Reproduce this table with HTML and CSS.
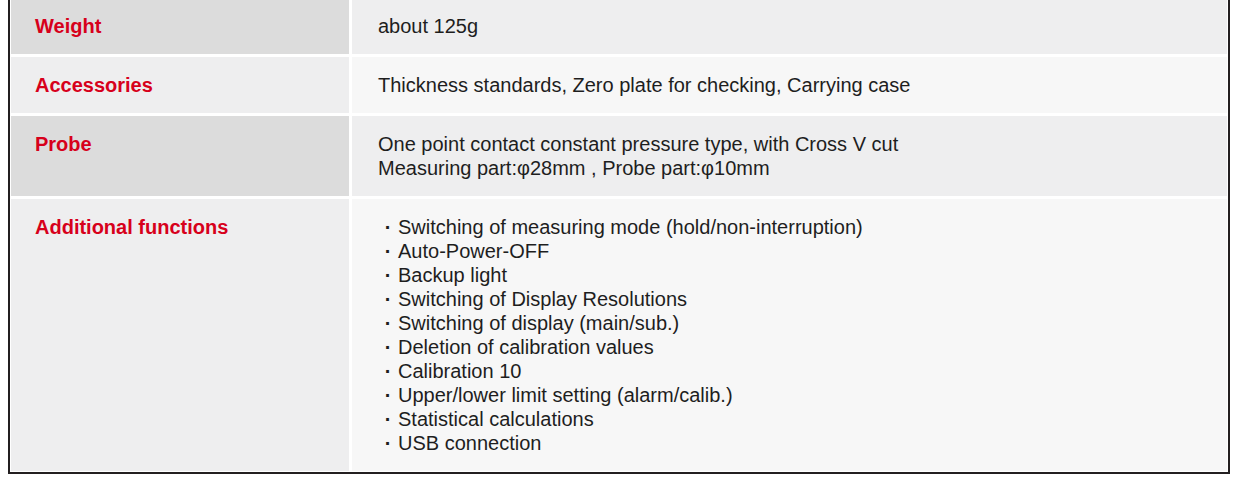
FILE: index.html
```html
<!DOCTYPE html>
<html lang="en">
<head>
<meta charset="utf-8">
<title>Specifications</title>
<link rel="stylesheet" href="styles.css">
</head>
<body>
<div class="spec">
  <div class="label dark">Weight</div>
  <div class="value mid">about 125g</div>

  <div class="label mid">Accessories</div>
  <div class="value light">Thickness standards, Zero plate for checking, Carrying case</div>

  <div class="label dark">Probe</div>
  <div class="value mid">One point contact constant pressure type, with Cross V cut<br>Measuring part:φ28mm , Probe part:φ10mm</div>

  <div class="label mid">Additional functions</div>
  <div class="value light">
    <ul class="list">
      <li><span class="dot">·</span><span>Switching of measuring mode (hold/non-interruption)</span></li>
      <li><span class="dot">·</span><span>Auto-Power-OFF</span></li>
      <li><span class="dot">·</span><span>Backup light</span></li>
      <li><span class="dot">·</span><span>Switching of Display Resolutions</span></li>
      <li><span class="dot">·</span><span>Switching of display (main/sub.)</span></li>
      <li><span class="dot">·</span><span>Deletion of calibration values</span></li>
      <li><span class="dot">·</span><span>Calibration 10</span></li>
      <li><span class="dot">·</span><span>Upper/lower limit setting (alarm/calib.)</span></li>
      <li><span class="dot">·</span><span>Statistical calculations</span></li>
      <li><span class="dot">·</span><span>USB connection</span></li>
    </ul>
  </div>
</div>
</body>
</html>
```

FILE: styles.css
```css
html, body {
  background: #ffffff;
}
body {
  margin: 0 8px;
  font-family: "Liberation Sans", Arial, sans-serif;
  font-size: 20px;
  line-height: 24px;
  color: #1e1e1e;
}
.spec {
  width: 1216px;
  margin-top: -5px;
  border: 2px solid #231f20;
  padding: 1px;
  display: grid;
  grid-template-columns: 338px 875px;
  column-gap: 3px;
  row-gap: 3px;
  background: #ffffff;
}
.label {
  padding: 16px 24px;
  font-weight: bold;
  color: #d7001b;
}
.value {
  padding: 16px 26px;
}
.dark { background: #dcdcdc; }
.mid { background: #eeeeef; }
.light { background: #f7f7f7; }
.list {
  list-style: none;
  margin: 0;
  padding: 0;
}
.list li {
  display: flex;
  align-items: baseline;
  height: 24px;
}
.dot {
  flex: 0 0 20px;
  width: 20px;
  text-align: center;
  font-weight: bold;
}
```
